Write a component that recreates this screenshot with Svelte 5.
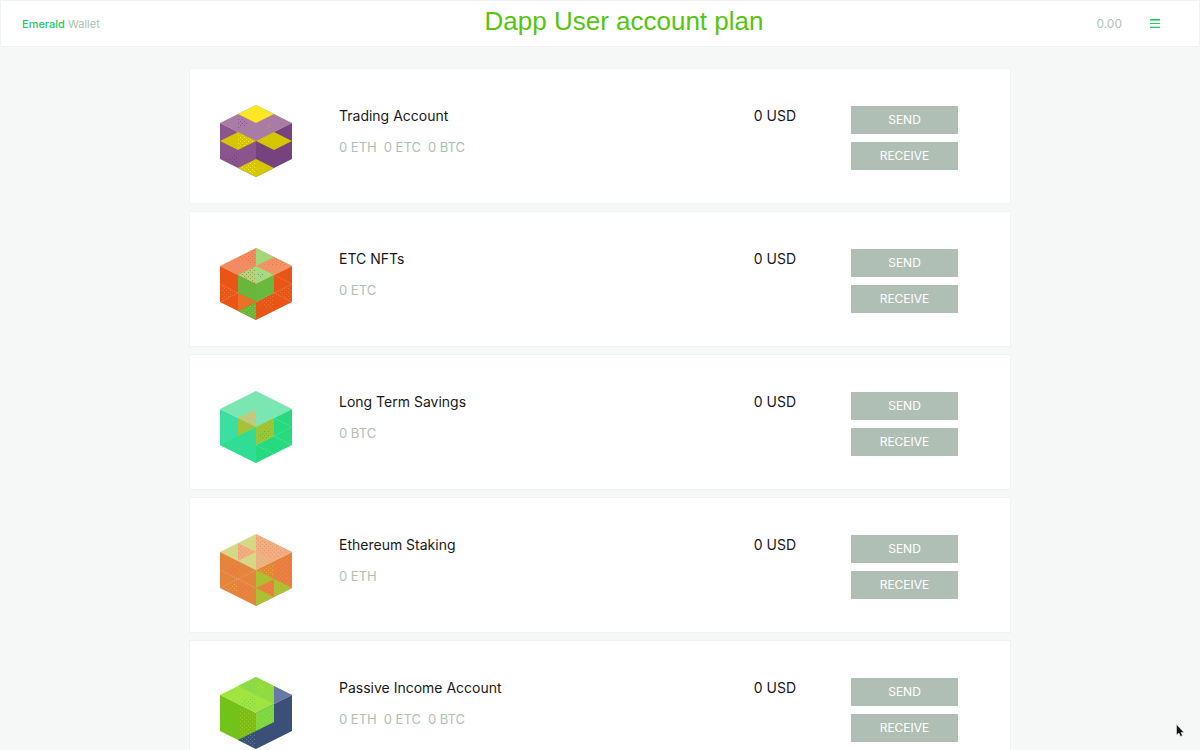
<script>
  const top = '36,0 72,18 36,36 0,18';
  const left = '0,18 36,36 36,72 0,54';
  const right = '36,36 72,18 72,54 36,72';

  // Each face is [fill, points]; each dotted area is [dot colour, points].
  const accounts = [
    {
      name: 'Trading Account',
      balances: ['0 ETH', '0 ETC', '0 BTC'],
      total: '0 USD',
      faces: [
        ['#a97ca5', top], ['#8a548c', left], ['#77437f', right],
        ['#fde725', '36,0 54,9 36,18 18,9'],
        ['#a97ca5', '18,27 36,18 54,27 36,36'],
        ['#d5c600', '0,36 18,27 36,36 18,45'],
        ['#d5c600', '36,36 54,27 72,36 54,45'],
        ['#d5c600', '36,54 54,63 36,72 18,63']
      ],
      dots: [
        ['#824783', '18,12 30,18 18,24'],
        ['#fff04a', '18,28 35,36 18,44'],
        ['#6c3a78', '18,47 18,63 5,55'],
        ['#fff04a', '36,55 36,71 19,63'],
        ['#e8b060', '46,20 52,18 50,24']
      ]
    },
    {
      name: 'ETC NFTs',
      balances: ['0 ETC'],
      total: '0 USD',
      faces: [
        ['#f28a62', top], ['#ea5516', left], ['#e95517', right],
        ['#f19366', '36,18 54,9 72,18 54,27'],
        ['#9fd97a', '36,0 54,9 36,18'],
        ['#a7d980', '18,27 36,18 54,27 36,36'],
        ['#69b63a', '18,27 36,36 36,54 18,45'],
        ['#68b93d', '36,36 54,27 54,45 36,54'],
        ['#eb7129', '18,45 36,54 18,63'],
        ['#69b63a', '36,54 36,72 18,63']
      ],
      dots: [
        ['#ed6a3b', '18,9 36,0 36,18'],
        ['#f2a064', '20,14 34,18 20,24'],
        ['#cd7a35', '18,27 36,18 36,36'],
        ['#4f9c8a', '38,24 46,27 38,30'],
        ['#eb7f38', '1,37 18,45 1,53'],
        ['#ed7734', '54,45 71,37 71,54'],
        ['#ee7c38', '37,55 54,46 54,63'],
        ['#8ad04a', '36,55 36,70 20,63'],
        ['#ef6d38', '42,18 54,10 70,18']
      ],
      lines: 'M54 27 72 36 36 54M54 45 72 54M0 36 18 45 0 54'
    },
    {
      name: 'Long Term Savings',
      balances: ['0 BTC'],
      total: '0 USD',
      faces: [
        ['#7ae7b3', top], ['#3cdfa2', left], ['#27da80', right],
        ['#31dd94', '0,54 36,36 36,72'],
        ['#b9cf80', '36,18 36,36 18,27'],
        ['#9acb36', '18,27 36,36 18,45'],
        ['#98c832', '36,36 54,27 54,45 36,54']
      ],
      dots: [
        ['#e7af78', '36,19 36,35 19,27'],
        ['#d9a040', '18,28 35,36 18,43'],
        ['#c8a03a', '37,37 54,28 54,45 37,53'],
        ['#4fb544', '39,42 50,38 50,46 40,48']
      ],
      lines: 'M36 54 72 36M54 27 72 36M54 45 72 54M36 54 54 63'
    },
    {
      name: 'Ethereum Staking',
      balances: ['0 ETH'],
      total: '0 USD',
      faces: [
        ['#d5d985', top], ['#e5843d', left], ['#e5843d', right],
        ['#eeaf81', '36,0 72,18 36,36'],
        ['#eeaf81', '18,9 36,18 18,27'],
        ['#abc032', '36,36 72,54 36,72'],
        ['#e5843d', '36,54 54,45 54,63']
      ],
      dots: [
        ['#f5896d', '36,2 70,18 54,25 36,16'],
        ['#f5896d', '18,10 34,18 18,26'],
        ['#f26044', '4,36 18,30 18,42'],
        ['#f0bc3d', '6,54 18,48 18,58'],
        ['#f26044', '20,49 34,55 20,61'],
        ['#dec21b', '38,37 54,28 54,44'],
        ['#f26044', '55,28 71,20 71,52 55,44'],
        ['#f26044', '38,54 53,47 53,61'],
        ['#dfd17c', '37,22 50,27 37,34']
      ],
      lines: 'M0 36 36 54M0 54 36 36'
    },
    {
      name: 'Passive Income Account',
      balances: ['0 ETH', '0 ETC', '0 BTC'],
      total: '0 USD',
      faces: [
        ['#a0e440', top], ['#72c21a', left], ['#3b5079', right],
        ['#8edb43', '18,9 36,0 36,18'],
        ['#8edb43', '36,18 54,9 54,27'],
        ['#8edb43', '36,0 54,9 36,18'],
        ['#6679a8', '54,9 72,18 54,27'],
        ['#84d83c', '36,36 54,27 54,45 36,54'],
        ['#3b5079', '36,54 36,72 18,63']
      ],
      dots: [
        ['#74cf45', '18,26 36,18 36,34'],
        ['#7dd34b', '19,9 35,2 35,17'],
        ['#f3d529', '38,6 48,9 38,13'],
        ['#62ce1f', '1,37 18,45 1,53'],
        ['#c9b522', '19,29 35,37 35,54 19,61'],
        ['#62cb4b', '37,36 54,28 54,44 37,52'],
        ['#658aab', '36,55 36,71 19,63']
      ]
    }
  ];
</script>

<header>
  <a class="brand" href="#home"><span>Emerald</span> Wallet</a>
  <h1>Dapp User account plan</h1>
  <div class="tools">
    <span class="sum">0.00</span>
    <button class="menu" aria-label="Menu">
      <svg width="10" height="9" viewBox="0 0 10 9" aria-hidden="true">
        <path d="M0 0H10V1H0ZM0 4H10V5H0ZM0 8H10V9H0Z" fill="#2bc86b" />
        <path d="M0 1H10V2H0Z" fill="#6edca0" />
        <path d="M0 7H10V8H0Z" fill="#bdeccf" />
      </svg>
    </button>
  </div>
</header>

<main>
  {#each accounts as account, i}
    <article>
      <svg class="cube" width="72" height="72" viewBox="0 0 72 72" aria-hidden="true">
        <defs>
          {#each account.dots as dot, j}
            <pattern id="dots-{i}-{j}" width="4" height="4" patternUnits="userSpaceOnUse">
              <path d="M0 0H1V1H0ZM2 2H3V3H2Z" fill={dot[0]} />
            </pattern>
          {/each}
        </defs>
        {#each account.faces as face}
          <polygon points={face[1]} fill={face[0]} />
        {/each}
        {#if account.lines}
          <path d={account.lines} fill="none" stroke="#ffffff" stroke-opacity="0.25" stroke-dasharray="1 1" />
        {/if}
        {#each account.dots as dot, j}
          <polygon points={dot[1]} fill="url(#dots-{i}-{j})" fill-opacity="0.8" />
        {/each}
      </svg>
      <div class="details">
        <h2>{account.name}</h2>
        <ul>
          {#each account.balances as balance}
            <li>{balance}</li>
          {/each}
        </ul>
      </div>
      <div class="total">{account.total}</div>
      <div class="actions">
        <button>SEND</button>
        <button>RECEIVE</button>
      </div>
    </article>
  {/each}
</main>

<svg class="pointer" width="8" height="13" viewBox="0 0 8 13" aria-hidden="true">
  <path d="M.5.5V11L3 9L4.5 12.5L6.500 11.500L5 8.500H8Z" fill="#111" stroke="#dfe8e3" stroke-width=".6" />
</svg>

<style>
  :global(body) {
    margin: 0;
    background: #f6f8f8;
    color: #191919;
    font-family: Inter, "Liberation Sans", sans-serif;
  }
  header {
    box-sizing: border-box;
    display: grid;
    grid-template-columns: 1fr auto 1fr;
    align-items: center;
    height: 47px;
    padding: 0 33px 0 21px;
    background: #fff;
    border: 1px solid #eff3f2;
  }
  .brand {
    color: #b0bfb6;
    font-size: 11px;
    line-height: 16px;
    text-decoration: none;
  }
  .brand span {
    color: #1fc764;
    font-weight: 500;
  }
  h1 {
    margin: 0;
    padding: 0 0 6px 60px;
    color: #55c50f;
    font: 400 26px/30px "Liberation Sans", Arial, sans-serif;
  }
  .tools {
    display: flex;
    align-items: center;
    justify-content: flex-end;
    gap: 22px;
  }
  .sum {
    color: #b0bfb6;
    font-size: 12px;
    line-height: 16px;
  }
  .menu {
    display: flex;
    padding: 6px;
    border: 0;
    background: none;
  }
  main {
    display: grid;
    gap: 7px;
    max-width: 822px;
    margin: 21px auto;
  }
  article {
    box-sizing: border-box;
    display: flex;
    align-items: flex-start;
    min-height: 136px;
    padding: 36px 52px 24px 30px;
    background: #fff;
    border: 1px solid #eff3f2;
  }
  .cube {
    flex: none;
  }
  .details {
    flex: 1;
    margin-left: 47px;
  }
  .details,
  .total,
  .actions {
    padding-top: 1px;
  }
  h2,
  .total {
    margin: 0;
    font-size: 14px;
    font-weight: 400;
    line-height: 20px;
  }
  ul {
    display: flex;
    gap: 7px;
    margin: 11px 0 0;
    padding: 0;
    list-style: none;
    color: #b0bfb6;
    font-size: 13px;
    line-height: 20px;
  }
  .actions {
    display: grid;
    gap: 8px;
    width: 107px;
    margin-left: 55px;
  }
  .actions button {
    height: 28px;
    padding: 0;
    border: 0;
    background: #b0bfb6;
    color: #fff;
    font: 400 12px/16px Inter, "Liberation Sans", sans-serif;
  }
  .pointer {
    position: fixed;
    right: 16px;
    bottom: 13px;
    pointer-events: none;
  }
</style>
